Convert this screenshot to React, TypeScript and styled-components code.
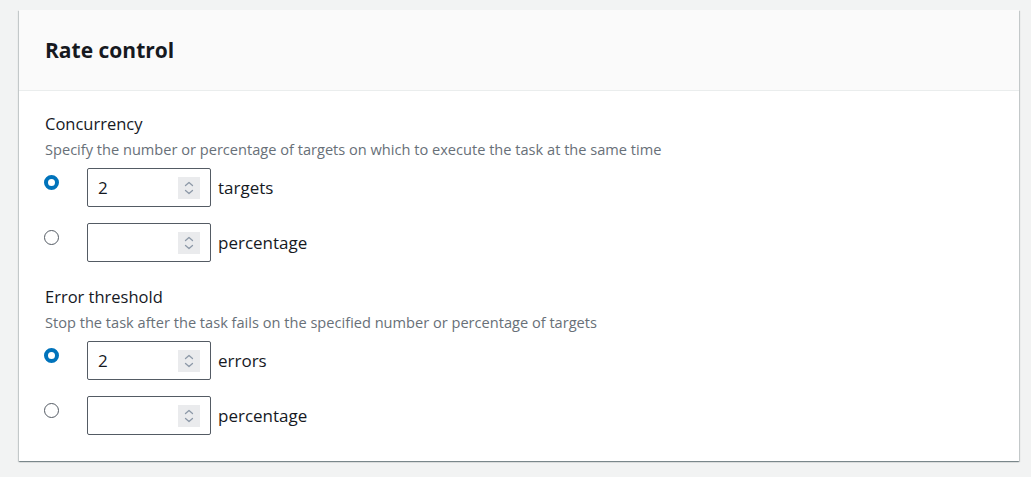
import React from "react";
import styled, { createGlobalStyle } from "styled-components";

const Global = createGlobalStyle`
  html, body { margin: 0; padding: 0; background: #f2f3f3; }
  body { font-family: "Open Sans", "Noto Sans", sans-serif; color: #16191f; }
`;

const Page = styled.div`
  padding: 10px 12px 16px 19px;
`;

const Card = styled.section`
  width: 1000px;
  background: #ffffff;
  box-shadow: 0 1px 1px 0 rgba(0, 28, 36, 0.3), 1px 1px 1px 0 rgba(0, 28, 36, 0.15),
    -1px 1px 1px 0 rgba(0, 28, 36, 0.15);
`;

const Header = styled.header`
  height: 80px;
  background: #fafafa;
  border-bottom: 1px solid #eaeded;
  display: flex;
  align-items: center;
  padding: 0 26px;
`;

const Title = styled.h2`
  margin: 0;
  font-size: 21px;
  font-weight: 700;
  line-height: 28px;
  color: #16191f;
`;

const Body = styled.div`
  padding: 22px 26px 26px;
  display: flex;
  flex-direction: column;
  gap: 24px;
`;

const Field = styled.div`
  display: flex;
  flex-direction: column;
`;

const Label = styled.div`
  font-size: 16.5px;
  line-height: 22px;
`;

const Desc = styled.div`
  margin-top: 5px;
  font-size: 14.6px;
  line-height: 18px;
  color: #687078;
`;

const Options = styled.div`
  margin-top: 10px;
  display: flex;
  flex-direction: column;
  gap: 16px;
`;

const OptionRow = styled.div`
  display: flex;
  align-items: flex-start;
`;

const RadioCell = styled.div`
  width: 42px;
  padding-top: 7px;
  margin-left: -1px;
  box-sizing: border-box;
`;

const Radio = styled.span<{ $checked?: boolean }>`
  display: block;
  width: 15px;
  height: 15px;
  box-sizing: border-box;
  border-radius: 50%;
  background: #fff;
  border: ${(p) => (p.$checked ? "4.5px solid #0073bb" : "1.5px solid #545b64")};
`;

const InputGroup = styled.div`
  display: flex;
  align-items: center;
  gap: 7px;
  margin-left: 1px;
`;

const NumberBox = styled.div`
  width: 124px;
  height: 39px;
  box-sizing: border-box;
  border: 1px solid #545b64;
  border-radius: 2px;
  display: flex;
  align-items: center;
  padding: 0 10px 0 10px;
  background: #fff;
`;

const Value = styled.span`
  flex: 1;
  font-size: 17px;
  line-height: 22px;
`;

const Spinner = styled.span`
  width: 22px;
  height: 22px;
  background: #eaebed;
  display: flex;
  align-items: center;
  justify-content: center;
`;

const Unit = styled.span`
  font-size: 17px;
  line-height: 22px;
`;

const SpinIcon = () => (
  <svg width="22" height="22" viewBox="0 0 22 22" fill="none">
    <path d="M7.5 8.5 L11 5.5 L14.5 8.5" stroke="#8d99a8" strokeWidth="1.3" strokeLinecap="round" strokeLinejoin="round" />
    <path d="M7.5 13.5 L11 16.5 L14.5 13.5" stroke="#8d99a8" strokeWidth="1.3" strokeLinecap="round" strokeLinejoin="round" />
  </svg>
);

type Opt = { checked: boolean; value: string; unit: string };

const Option = ({ checked, value, unit }: Opt) => (
  <OptionRow>
    <RadioCell>
      <Radio $checked={checked} />
    </RadioCell>
    <InputGroup>
      <NumberBox>
        <Value>{value}</Value>
        <Spinner>
          <SpinIcon />
        </Spinner>
      </NumberBox>
      <Unit>{unit}</Unit>
    </InputGroup>
  </OptionRow>
);

const fields = [
  {
    label: "Concurrency",
    desc: "Specify the number or percentage of targets on which to execute the task at the same time",
    options: [
      { checked: true, value: "2", unit: "targets" },
      { checked: false, value: "", unit: "percentage" },
    ],
  },
  {
    label: "Error threshold",
    desc: "Stop the task after the task fails on the specified number or percentage of targets",
    options: [
      { checked: true, value: "2", unit: "errors" },
      { checked: false, value: "", unit: "percentage" },
    ],
  },
];

export default function App() {
  return (
    <>
      <Global />
      <Page>
        <Card>
          <Header>
            <Title>Rate control</Title>
          </Header>
          <Body>
            {fields.map((f) => (
              <Field key={f.label}>
                <Label>{f.label}</Label>
                <Desc>{f.desc}</Desc>
                <Options>
                  {f.options.map((o, i) => (
                    <Option key={i} {...o} />
                  ))}
                </Options>
              </Field>
            ))}
          </Body>
        </Card>
      </Page>
    </>
  );
}
